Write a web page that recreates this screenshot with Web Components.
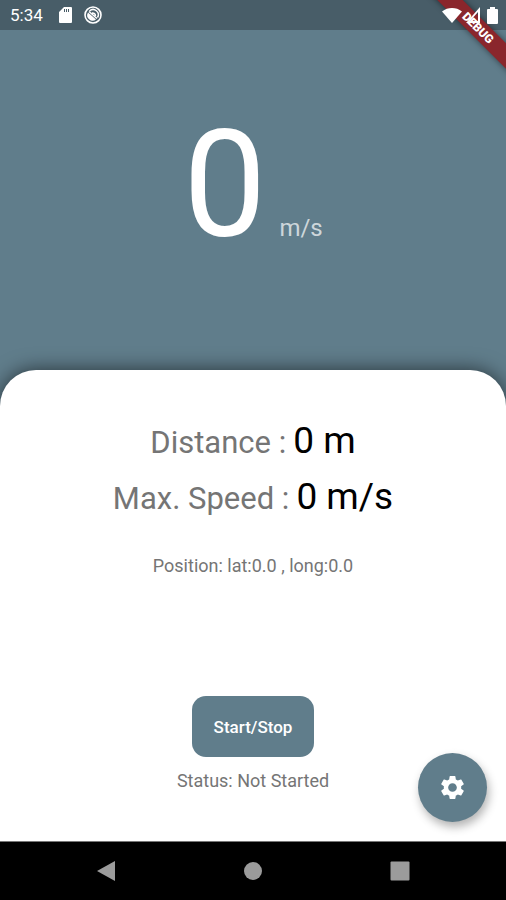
<!DOCTYPE html>
<html lang="en">
<head>
<meta charset="utf-8">
<meta name="viewport" content="width=device-width, initial-scale=1">
<title>Speedometer</title>
<style>
  body {
    margin: 0;
    font-family: Roboto, "Liberation Sans", sans-serif;
    --primary: #607d8b;
    --muted: #757575;
  }
</style>
</head>
<body>
<speedo-app>
  <status-bar slot="top" time="5:34"></status-bar>
  <debug-banner slot="top">DEBUG</debug-banner>
  <speed-display unit="m/s">0</speed-display>
  <info-sheet>
    <stat-row label="Distance :">0 m</stat-row>
    <stat-row label="Max. Speed :">0 m/s</stat-row>
    <span slot="position">Position: lat:0.0 , long:0.0</span>
    <toggle-button slot="action">Start/Stop</toggle-button>
    <span slot="status">Status: Not Started</span>
    <settings-button slot="fab"></settings-button>
  </info-sheet>
  <nav-bar slot="bottom"></nav-bar>
</speedo-app>

<script>
'use strict';

// Attaches an open shadow root and fills it from a template
function render(elem, html) {
  const template = document.createElement('template')
  template.innerHTML = html
  elem.attachShadow({mode: 'open'}).appendChild(template.content.cloneNode(true))
}

/** Whole screen: system bars around the content */
class SpeedoApp extends HTMLElement {
  constructor() {
    super()
    render(this, `
      <style>
        :host {
          display: flex;
          flex-direction: column;
          position: relative;
          min-height: 100vh;
          overflow: hidden;
          background: var(--primary);
        }
        main {
          flex: 1;
          display: flex;
          flex-direction: column;
        }
      </style>
      <slot name="top"></slot>
      <main><slot></slot></main>
      <slot name="bottom"></slot>
    `)
  }
}

/** Android status bar */
class StatusBar extends HTMLElement {
  constructor() {
    super()
    render(this, `
      <style>
        :host {
          display: flex;
          align-items: center;
          box-sizing: border-box;
          height: 30px;
          padding: 0 8px 0 10px;
          background: rgba(0, 0, 0, .25);
          color: #fff;
        }
        .time { font-size: 17px; line-height: 20px; margin-right: 16px; }
        .card { margin-right: 12px; }
        .wifi { margin-left: auto; }
        .cell { margin: 0 6px 0 3px; }
        /* these icons stay above the debug ribbon */
        .wifi, .cell, .battery { position: relative; z-index: 2; }
        svg { display: block; fill: currentColor; }
      </style>
      <span class="time"></span>
      <svg class="card" width="13" height="16" viewBox="0 0 13 16">
        <path fill-rule="evenodd" d="M5 0h7a1 1 0 0 1 1 1v14a1 1 0 0 1-1 1H1a1 1 0 0 1-1-1V5zM5 2v3h1V2zM7 2v3h1V2zM9 2v3h1V2z"/>
      </svg>
      <svg width="18" height="18" viewBox="0 0 18 18">
        <circle cx="9" cy="9" r="8" fill="none" stroke="currentColor" stroke-width="1.6"/>
        <path d="M5.500 5A5.200 5.200 0 0 1 13.500 11.500" fill="none" stroke="currentColor" stroke-width="1.500"/>
        <path d="M4 6.500A5.400 5.400 0 0 0 12 13.500z"/>
        <path d="M5 5.500l8 7M8 7a3 3 0 0 1 3.500 3" fill="none" stroke="currentColor" stroke-width="1.500"/>
      </svg>
      <svg class="wifi" width="20" height="15" viewBox="0 0 20 15">
        <path d="M10 15L0 3.500C6-1.100 14-1.100 20 3.500z"/>
      </svg>
      <svg class="cell" width="16" height="16" viewBox="0 0 16 16">
        <path fill-rule="evenodd" d="M15 0v16H1zM13 5L5 14h8z"/>
      </svg>
      <svg class="battery" width="11" height="17" viewBox="0 0 11 17">
        <path d="M3 0h5v2h2a1 1 0 0 1 1 1v13a1 1 0 0 1-1 1H1a1 1 0 0 1-1-1V3a1 1 0 0 1 1-1h2z"/>
      </svg>
    `)
  }

  connectedCallback() {
    this.shadowRoot.querySelector('.time').textContent = this.getAttribute('time')
  }
}

/** Diagonal ribbon over the top right corner */
class DebugBanner extends HTMLElement {
  constructor() {
    super()
    render(this, `
      <style>
        :host {
          position: absolute;
          top: 0;
          right: 0;
          z-index: 1;
          width: 56px;
          height: 56px;
          display: flex;
          align-items: center;
          justify-content: center;
        }
        div {
          flex: none;
          width: 120px;
          transform: rotate(45deg);
          background: #8a262c;
          box-shadow: 0 0 6px rgba(0, 0, 0, .5);
          color: #fff;
          font-size: 12px;
          font-weight: 900;
          line-height: 18px;
          text-align: center;
        }
      </style>
      <div><slot></slot></div>
    `)
  }
}

/** Current speed with its unit */
class SpeedDisplay extends HTMLElement {
  constructor() {
    super()
    render(this, `
      <style>
        :host {
          display: flex;
          justify-content: center;
          align-items: baseline;
          gap: 13px;
          box-sizing: border-box;
          height: 340px;
          padding-top: 68px;
          color: #fff;
        }
        .value { font-size: 148px; line-height: 176px; }
        .unit { font-size: 24px; color: rgba(255, 255, 255, .7); }
      </style>
      <span class="value"><slot></slot></span>
      <span class="unit"></span>
    `)
  }

  connectedCallback() {
    this.shadowRoot.querySelector('.unit').textContent = this.getAttribute('unit')
  }
}

/** White rounded panel with the trip data and the controls */
class InfoSheet extends HTMLElement {
  constructor() {
    super()
    render(this, `
      <style>
        :host {
          flex: 1;
          display: flex;
          flex-direction: column;
          align-items: center;
          position: relative;
          box-sizing: border-box;
          padding: 49px 16px 48px;
          border-radius: 36px 36px 0 0;
          background: #fff;
          box-shadow: 0 0 20px rgba(0, 0, 0, .6);
          color: var(--muted);
          font-size: 18px;
          line-height: 24px;
        }
        .stats {
          display: flex;
          flex-direction: column;
          align-items: center;
          gap: 10px;
        }
        .position { margin-top: 33px; }
        .controls {
          margin-top: auto;
          display: flex;
          flex-direction: column;
          align-items: center;
          gap: 12px;
        }
        .fab { position: absolute; right: 19px; bottom: 19px; }
      </style>
      <div class="stats"><slot></slot></div>
      <div class="position"><slot name="position"></slot></div>
      <div class="controls">
        <slot name="action"></slot>
        <slot name="status"></slot>
      </div>
      <div class="fab"><slot name="fab"></slot></div>
    `)
  }
}

/** Label and value on one line */
class StatRow extends HTMLElement {
  constructor() {
    super()
    render(this, `
      <style>
        :host {
          display: flex;
          align-items: baseline;
          gap: 7px;
          line-height: 44px;
        }
        .label { font-size: 31px; }
        .value { font-size: 37px; color: #000; }
      </style>
      <span class="label"></span>
      <span class="value"><slot></slot></span>
    `)
  }

  connectedCallback() {
    this.shadowRoot.querySelector('.label').textContent = this.getAttribute('label')
  }
}

class ToggleButton extends HTMLElement {
  constructor() {
    super()
    render(this, `
      <style>
        :host { display: block; }
        button {
          display: block;
          height: 61px;
          padding: 0 22px;
          border: 0;
          border-radius: 14px;
          background: var(--primary);
          color: #fff;
          font: 500 17px/24px Roboto, "Liberation Sans", sans-serif;
          cursor: pointer;
        }
      </style>
      <button type="button"><slot></slot></button>
    `)
  }
}

/** Floating round button with the gear */
class SettingsButton extends HTMLElement {
  constructor() {
    super()
    render(this, `
      <style>
        :host { display: block; }
        button {
          display: flex;
          align-items: center;
          justify-content: center;
          width: 69px;
          height: 69px;
          padding: 0;
          border: 0;
          border-radius: 50%;
          background: var(--primary);
          box-shadow: 2px 5px 10px rgba(0, 0, 0, .3);
          color: #fff;
          cursor: pointer;
        }
        svg { fill: currentColor; }
      </style>
      <button type="button" aria-label="Settings">
        <svg width="29" height="29" viewBox="0 0 24 24">
          <path d="M19.140 12.940c.04-.3.06-.61.06-.94 0-.32-.02-.64-.07-.94l2.030-1.580c.18-.14.23-.41.12-.61l-1.920-3.320c-.12-.22-.37-.29-.59-.22l-2.390.96c-.5-.38-1.030-.7-1.620-.94l-.36-2.540c-.04-.24-.24-.41-.48-.41h-3.840c-.24 0-.43.17-.47.41l-.36 2.540c-.59.24-1.130.57-1.620.94l-2.390-.96c-.22-.08-.47 0-.59.22L2.740 8.870c-.12.21-.08.47.12.61l2.030 1.580c-.05.3-.09.63-.09.94s.02.64.07.94l-2.030 1.580c-.18.14-.23.41-.12.61l1.920 3.320c.12.22.37.29.59.22l2.390-.96c.5.38 1.030.7 1.620.94l.36 2.540c.05.24.24.41.48.41h3.840c.24 0 .44-.17.47-.41l.36-2.540c.59-.24 1.130-.56 1.620-.94l2.390.96c.22.08.47 0 .59-.22l1.920-3.320c.12-.22.07-.47-.12-.61l-2.010-1.580zM12 15.600c-1.980 0-3.600-1.620-3.600-3.600s1.620-3.600 3.600-3.600 3.600 1.620 3.600 3.600-1.620 3.600-3.600 3.600z"/>
        </svg>
      </button>
    `)
  }
}

/** Android navigation bar */
class NavBar extends HTMLElement {
  constructor() {
    super()
    render(this, `
      <style>
        :host {
          display: flex;
          justify-content: space-evenly;
          height: 58px;
          border-top: 1px solid #777;
          background: #000;
          position: relative;
        }
        button {
          display: flex;
          align-items: center;
          justify-content: center;
          width: 80px;
          padding: 0;
          border: 0;
          background: none;
          color: #9b9b9b;
        }
        svg { fill: currentColor; }
      </style>
      <button type="button" aria-label="Back">
        <svg width="20" height="22" viewBox="0 0 20 22"><path d="M18 1v20L0 11z"/></svg>
      </button>
      <button type="button" aria-label="Home">
        <svg width="20" height="20" viewBox="0 0 20 20"><circle cx="10" cy="10" r="9"/></svg>
      </button>
      <button type="button" aria-label="Recent apps">
        <svg width="20" height="20" viewBox="0 0 20 20"><rect x="0.500" y="0.500" width="19" height="19" rx="1"/></svg>
      </button>
    `)
  }
}

customElements.define('speedo-app', SpeedoApp)
customElements.define('status-bar', StatusBar)
customElements.define('debug-banner', DebugBanner)
customElements.define('speed-display', SpeedDisplay)
customElements.define('info-sheet', InfoSheet)
customElements.define('stat-row', StatRow)
customElements.define('toggle-button', ToggleButton)
customElements.define('settings-button', SettingsButton)
customElements.define('nav-bar', NavBar)
</script>
</body>
</html>
